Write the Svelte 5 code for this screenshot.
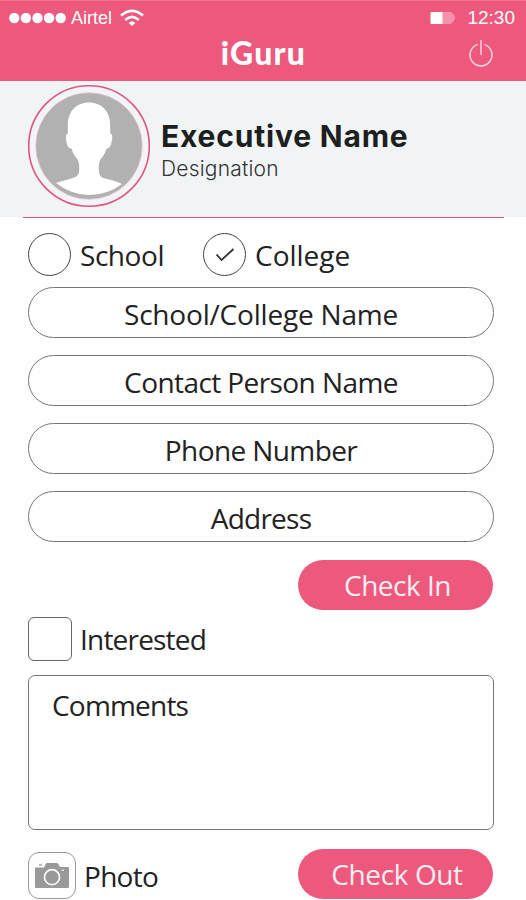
<script>
  const fields = [
    { label: "School/College Name", spacing: -0.2 },
    { label: "Contact Person Name", spacing: -0.58 },
    { label: "Phone Number", spacing: -0.6 },
    { label: "Address", spacing: -0.75 },
  ];

  let kind = $state("college");
  let interested = $state(false);
</script>

<main class="screen">
  <header class="topbar">
    <div class="status">
      <svg class="dots" width="57" height="12" viewBox="0 0 57 12" aria-hidden="true">
        {#each [0, 1, 2, 3, 4] as i}
          <circle cx={5.3 + i * 11.6} cy="6" r="5.2" fill="#fff" />
        {/each}
      </svg>
      <span class="carrier">Airtel</span>
      <svg class="wifi" width="24" height="18" viewBox="0 0 24 18" aria-hidden="true">
        <g fill="none" stroke="#fff" stroke-width="2.6">
          <path d="M1 6.6 Q12 -3 23 6.6" />
          <path d="M5.2 11 Q12 4.8 18.8 11" />
        </g>
        <path d="M8.6 14 Q12 10.6 15.4 14 L12 17 Z" fill="#fff" />
      </svg>
      <svg class="battery" width="26" height="14" viewBox="0 0 26 14" aria-hidden="true">
        <path d="M1 1 H20 Q22 1 23 3 L25 5 V8 L23 11 Q22 13 20 13 H1 Z" fill="#fff" opacity="0.35" />
        <rect x="0.5" y="1" width="12" height="12" rx="1" fill="#fff" />
      </svg>
      <span class="clock">12:30</span>
    </div>
    <div class="titlebar">
      <h1>iGuru</h1>
      <button class="power" type="button" aria-label="Power">
        <svg width="26" height="28" viewBox="0 0 26 28">
          <g fill="none" stroke="#fbd3de" stroke-width="1.5" stroke-linecap="round">
            <path d="M9.2 5.6 A11 11 0 1 0 16.8 5.6" />
            <path d="M13 1.5 V15.5" />
          </g>
        </svg>
      </button>
    </div>
  </header>

  <section class="profile">
    <svg class="avatar" width="124" height="124" viewBox="0 0 124 124" aria-hidden="true">
      <circle cx="62" cy="62" r="60.3" fill="#f3f4f7" stroke="#e2557c" stroke-width="1.6" />
      <circle cx="62" cy="62" r="53.2" fill="#b1b1b1" stroke="#e3c3cc" stroke-width="0.8" />
      <path
        d="M62 18.5 C75 18.5 83.5 28 83.2 42 V49.5 C86 50 85.5 54 84.5 58 C83.8 62 82.5 64.5 79.5 64.5
           C78 70 75.5 73 73 76 C71.5 80 71.5 84 72 88 C72.5 93 76 94 80 95 C86 96.5 91 97.5 95 100
           A53 53 0 0 1 29 99 C33 97.5 38 96.5 43 95 C48 93.5 51.5 92 52 88 C52.5 84 52.5 80 51 76
           C48.5 73 46 70 44.5 64.5 C41.5 64.5 40.2 62 39.5 58 C38.5 54 38.5 50 40.8 49.5 V42
           C40.5 28 49 18.5 62 18.5 Z"
        fill="#fff"
      />
    </svg>
    <div class="who">
      <h2>Executive Name</h2>
      <p>Designation</p>
    </div>
  </section>
  <div class="rule"></div>

  <form class="form" onsubmit={(e) => e.preventDefault()}>
    <div class="kinds">
      <button class="option school" type="button" onclick={() => (kind = "school")}>
        <span class="radio">
          {#if kind === "school"}
            <svg width="20" height="16" viewBox="0 0 20 16"><path d="M1.5 7.5 L6.5 13 L18.5 2" /></svg>
          {/if}
        </span>
        <span>School</span>
      </button>
      <button class="option college" type="button" onclick={() => (kind = "college")}>
        <span class="radio">
          {#if kind === "college"}
            <svg width="20" height="16" viewBox="0 0 20 16"><path d="M1.5 7.5 L6.5 13 L18.5 2" /></svg>
          {/if}
        </span>
        <span>College</span>
      </button>
    </div>

    <div class="fields">
      {#each fields as field}
        <div class="field">
          <span style="letter-spacing: {field.spacing}px">{field.label}</span>
        </div>
      {/each}
    </div>

    <button class="action check-in" type="button"><span>Check In</span></button>

    <button class="option interested" type="button" onclick={() => (interested = !interested)}>
      <span class="checkbox">
        {#if interested}
          <svg width="20" height="16" viewBox="0 0 20 16"><path d="M1.5 7.5 L6.5 13 L18.5 2" /></svg>
        {/if}
      </span>
      <span>Interested</span>
    </button>

    <div class="comments"><span>Comments</span></div>

    <div class="bottom">
      <button class="option photo" type="button">
        <span class="camera">
          <svg width="36" height="28" viewBox="0 0 36 28">
            <path
              d="M1 5.5 H10 L12 1.5 Q12.4 1 13.2 1 H22.8 Q23.6 1 24 1.5 L26 5 H34 Q35 5 35 6 V25 Q35 26 34 26 H2 Q1 26 1 25 Z"
              fill="#999"
            />
            <rect x="5" y="1.8" width="3" height="2.2" fill="#bbb" />
            <circle cx="18" cy="15.2" r="7.5" fill="#999" stroke="#fff" stroke-width="1.7" />
            <rect x="27.5" y="7.5" width="2.5" height="1.5" fill="#ddd" />
          </svg>
        </span>
        <span>Photo</span>
      </button>
      <button class="action check-out" type="button"><span>Check Out</span></button>
    </div>
  </form>
</main>

<style>
  :global(body) {
    background: #fefefe;
  }

  .screen {
    --pink: #ed587d;
    --line: #777;
    width: 526px;
    height: 900px;
    overflow: hidden;
    background: #fefefe;
    color: #222;
    font-family: "Open Sans", "Noto Sans", sans-serif;
    font-size: 28px;
    line-height: 38px;
  }

  button {
    margin: 0;
    padding: 0;
    border: 0;
    background: none;
    color: inherit;
    font: inherit;
    cursor: pointer;
  }

  svg {
    display: block;
    flex: none;
  }

  .topbar {
    box-sizing: border-box;
    height: 81px;
    border-top: 1px solid #f27491;
    background: var(--pink);
    color: #fff;
  }

  .status {
    display: flex;
    align-items: center;
    height: 34px;
    padding: 0 11px 0 9px;
    font-family: "Liberation Sans", Arial, sans-serif;
    font-size: 18px;
    line-height: 34px;
  }

  .carrier {
    margin-left: 5px;
  }

  .wifi {
    margin-left: 8px;
  }

  .battery {
    margin-left: auto;
    margin-right: 11px;
  }

  .clock {
    font-size: 19px;
  }

  .titlebar {
    display: grid;
    grid-template-columns: 1fr auto 1fr;
    align-items: center;
    height: 36px;
    padding: 0 32px;
  }

  h1 {
    grid-column: 2;
    margin: 0 0 0 1px;
    font-family: Lato, sans-serif;
    font-size: 32px;
    font-weight: 900;
    line-height: 36px;
    letter-spacing: 1.2px;
  }

  .power {
    justify-self: end;
  }

  .profile {
    display: flex;
    align-items: center;
    box-sizing: border-box;
    height: 136px;
    padding: 0 27px 6px;
    background: #f0f4f5;
  }

  .who {
    margin-left: 10px;
    padding-top: 7px;
    font-family: Inter, sans-serif;
  }

  h2,
  p {
    margin: 0;
    white-space: nowrap;
  }

  h2 {
    color: #1c1e20;
    font-size: 30px;
    font-weight: 700;
    line-height: 38px;
    letter-spacing: 0.8px;
  }

  p {
    color: #333;
    font-size: 21px;
    font-weight: 300;
    line-height: 27px;
    letter-spacing: 0.2px;
  }

  .rule {
    height: 1px;
    margin: 0 22px 0 23px;
    background: #e5557b;
  }

  .form {
    display: flex;
    flex-direction: column;
    padding: 15px 32px 0 28px;
  }

  .kinds {
    display: flex;
    height: 43px;
  }

  .option {
    display: flex;
    align-items: center;
    align-self: flex-start;
    white-space: nowrap;
  }

  .school {
    width: 175px;
    letter-spacing: -0.45px;
  }

  .radio,
  .checkbox,
  .camera {
    display: grid;
    place-items: center;
    box-sizing: border-box;
    width: 43px;
    height: 43px;
    margin-right: 9px;
    border: 1px solid #444;
    border-radius: 50%;
  }

  .radio path,
  .checkbox path {
    fill: none;
    stroke: #333;
    stroke-width: 1.8;
  }

  .fields {
    display: flex;
    flex-direction: column;
    gap: 17px;
    margin-top: 11px;
  }

  .field {
    display: flex;
    align-items: center;
    justify-content: center;
    box-sizing: border-box;
    height: 51px;
    padding-top: 3px;
    border: 1px solid var(--line);
    border-radius: 26px;
  }

  .action {
    width: 195px;
    height: 50px;
    border-radius: 25px;
    background: var(--pink);
    color: #fdeef2;
    white-space: nowrap;
  }

  .check-in {
    align-self: flex-end;
    margin: 18px 1px 0 0;
    padding-left: 4px;
    letter-spacing: -0.5px;
  }

  .check-out {
    padding-left: 3px;
    letter-spacing: -0.4px;
  }

  .interested {
    margin-top: 7px;
    letter-spacing: -0.8px;
  }

  .checkbox {
    width: 44px;
    height: 44px;
    margin-right: 8px;
    border-color: #666;
    border-radius: 6px;
  }

  .comments {
    box-sizing: border-box;
    height: 155px;
    margin-top: 14px;
    padding: 10px 23px;
    border: 1px solid var(--line);
    border-radius: 7px;
    letter-spacing: -0.8px;
  }

  .bottom {
    display: flex;
    justify-content: space-between;
    margin: 19px 1px 0 0;
  }

  .camera {
    width: 48px;
    height: 47px;
    margin-right: 8px;
    border-color: #999;
    border-radius: 11px;
  }

  .photo {
    margin-top: 3px;
    letter-spacing: -0.7px;
  }
</style>
